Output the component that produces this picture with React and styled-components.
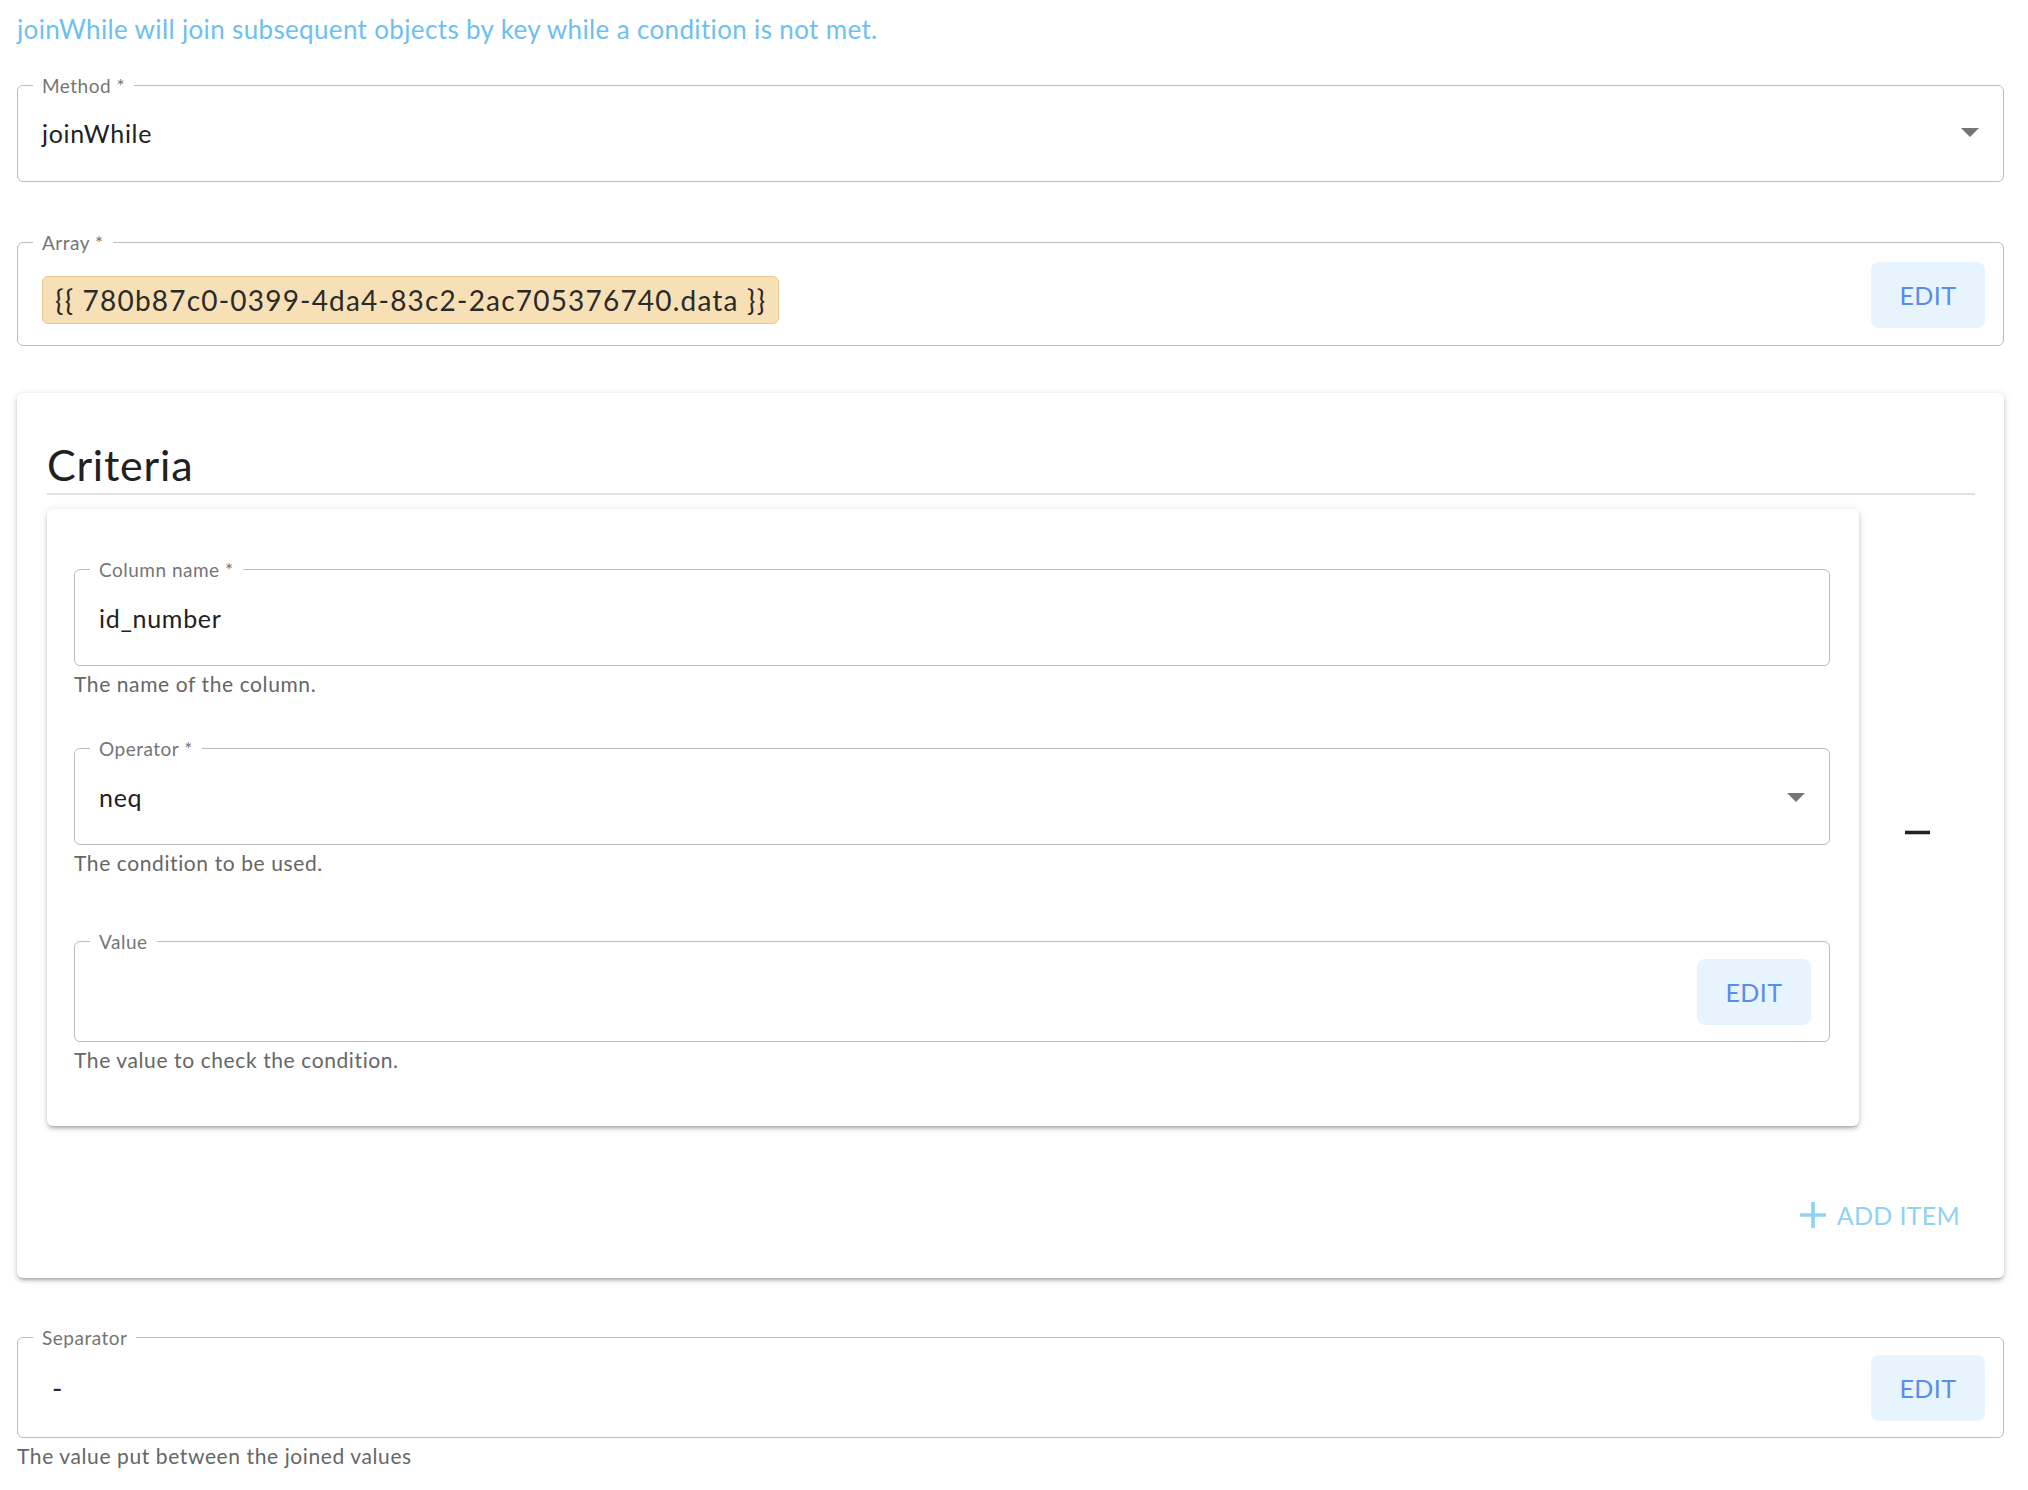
import React from "react";
import styled, { createGlobalStyle } from "styled-components";

const GlobalStyle = createGlobalStyle`
  html, body {
    margin: 0;
    background: #ffffff;
  }
  body {
    font-family: Lato, "Noto Sans", sans-serif;
    color: #212121;
  }
`;

// Layout
const Page = styled.div`
  display: flex;
  flex-direction: column;
  padding: 14px 24px 40px 17px;
`;

const Description = styled.p`
  margin: 0;
  font-size: 26px;
  line-height: 31px;
  letter-spacing: 0.35px;
  color: #6dbff1;
`;

const FieldBlock = styled.div`
  margin-top: ${(p) => p.$mt || 0}px;
  display: flex;
  flex-direction: column;
`;

const Fieldset = styled.fieldset`
  margin: 0;
  padding: 0 18px 0 24px;
  min-width: 0;
  border: 1px solid #bdbdbd;
  border-radius: 6px;
`;

const Legend = styled.legend`
  margin-left: -9px;
  padding: 0 9px;
  font-size: 19px;
  line-height: 19px;
  letter-spacing: 0.5px;
  color: #757575;
`;

const FieldRow = styled.div`
  display: flex;
  align-items: center;
  min-height: ${(p) => p.$h}px;
  padding: ${(p) => p.$pt || 0}px 0 ${(p) => p.$pb || 0}px;
`;

const ValueText = styled.span`
  font-size: 25px;
  letter-spacing: 0.7px;
  color: #212121;
`;

const Chip = styled.span`
  display: inline-flex;
  align-items: center;
  box-sizing: border-box;
  height: 48px;
  margin-top: ${(p) => p.$mt || 0}px;
  margin-left: ${(p) => (p.$plain ? -3 : 0)}px;
  padding: 0 12px;
  background: ${(p) => (p.$plain ? "transparent" : "#f7e0b6")};
  border: 1px solid ${(p) => (p.$plain ? "transparent" : "#e9c98f")};
  border-radius: 6px;
  font-size: 28px;
  letter-spacing: 1.2px;
  color: #2a2a2a;
  white-space: nowrap;
`;

const EditButton = styled.button`
  margin-left: auto;
  width: 114px;
  height: 66px;
  border: 0;
  border-radius: 8px;
  background: #e7f4fd;
  color: #5a8cee;
  font-family: Lato, "Noto Sans", sans-serif;
  font-size: 25px;
  letter-spacing: 0.5px;
  cursor: pointer;
`;

const Arrow = styled.svg`
  margin-left: auto;
  margin-right: 6px;
  width: 18px;
  height: 9px;
  fill: #757575;
`;

const Helper = styled.div`
  margin-top: 4px;
  font-size: 21px;
  line-height: 28px;
  letter-spacing: 0.6px;
  color: #666666;
`;

const Card = styled.section`
  margin-top: 47px;
  padding: 45px 29px 38px 30px;
  display: flex;
  flex-direction: column;
  background: #ffffff;
  border-radius: 6px;
  box-shadow: 0 3px 3px -2px rgba(0, 0, 0, 0.2), 0 3px 4px 0 rgba(0, 0, 0, 0.14),
    0 1px 8px 0 rgba(0, 0, 0, 0.12);
`;

const Heading = styled.h2`
  margin: 0;
  padding: 2px 0 3px;
  font-size: 43px;
  font-weight: 400;
  line-height: 50px;
  letter-spacing: 0.8px;
  color: #212121;
  border-bottom: 2px solid #e2e2e2;
`;

const ItemRow = styled.div`
  margin-top: 14px;
  display: flex;
  align-items: stretch;
`;

const ItemCard = styled.div`
  flex: 0 0 1812px;
  box-sizing: border-box;
  padding: 51px 29px 52px 27px;
  display: flex;
  flex-direction: column;
  background: #ffffff;
  border-radius: 6px;
  box-shadow: 0 3px 3px -2px rgba(0, 0, 0, 0.2), 0 3px 4px 0 rgba(0, 0, 0, 0.14),
    0 1px 8px 0 rgba(0, 0, 0, 0.12);
`;

const RemoveCell = styled.div`
  flex: 1;
  display: flex;
  align-items: center;
  justify-content: center;
  padding-top: 30px;
`;

const IconButton = styled.button`
  display: flex;
  align-items: center;
  justify-content: center;
  padding: 8px;
  border: 0;
  background: none;
  cursor: pointer;
  svg {
    width: 25px;
    height: 25px;
    fill: #222222;
  }
`;

const AddButton = styled.button`
  align-self: flex-end;
  margin-top: 64px;
  height: 50px;
  padding: 0 15px 0 8px;
  display: inline-flex;
  align-items: center;
  gap: 11px;
  border: 0;
  background: none;
  color: #8fd2f5;
  font-family: Lato, "Noto Sans", sans-serif;
  font-size: 25px;
  letter-spacing: 0.3px;
  cursor: pointer;
  svg {
    width: 26px;
    height: 26px;
    fill: #8fd2f5;
  }
`;

const DropArrow = () => (
  <Arrow viewBox="7 10 10 5">
    <path d="M7 10l5 5 5-5z" />
  </Arrow>
);

const TextField = ({ label, value, select, helper, mt, pb = 8 }) => (
  <FieldBlock $mt={mt}>
    <Fieldset>
      <Legend>{label}</Legend>
      <FieldRow $h={86 - pb} $pb={pb}>
        <ValueText>{value}</ValueText>
        {select && <DropArrow />}
      </FieldRow>
    </Fieldset>
    {helper && <Helper>{helper}</Helper>}
  </FieldBlock>
);

const App = () => {
  return (
    <>
      <GlobalStyle />
      <Page>
        <Description>
          joinWhile will join subsequent objects by key while a condition is not met.
        </Description>

        <TextField label="Method *" value="joinWhile" select mt={31} pb={11} />

        <FieldBlock $mt={51}>
          <Fieldset>
            <Legend>Array *</Legend>
            <FieldRow $pt={8} $pb={16} $h={69}>
              <Chip $mt={11}>{"{{ 780b87c0-0399-4da4-83c2-2ac705376740.data }}"}</Chip>
              <EditButton>EDIT</EditButton>
            </FieldRow>
          </Fieldset>
        </FieldBlock>

        <Card>
          <Heading>Criteria</Heading>
          <ItemRow>
            <ItemCard>
              <TextField
                label="Column name *"
                value="id_number"
                helper="The name of the column."
              />
              <TextField
                label="Operator *"
                value="neq"
                select
                helper="The condition to be used."
                mt={41}
              />
              <FieldBlock $mt={55}>
                <Fieldset>
                  <Legend>Value</Legend>
                  <FieldRow $pt={8} $pb={16}>
                    <EditButton>EDIT</EditButton>
                  </FieldRow>
                </Fieldset>
                <Helper>The value to check the condition.</Helper>
              </FieldBlock>
            </ItemCard>
            <RemoveCell>
              <IconButton aria-label="remove">
                <svg viewBox="5 5 14 14">
                  <path d="M19 13H5v-2h14v2z" />
                </svg>
              </IconButton>
            </RemoveCell>
          </ItemRow>
          <AddButton>
            <svg viewBox="5 5 14 14">
              <path d="M19 13h-6v6h-2v-6H5v-2h6V5h2v6h6v2z" />
            </svg>
            ADD ITEM
          </AddButton>
        </Card>

        <FieldBlock $mt={50}>
          <Fieldset>
            <Legend>Separator</Legend>
            <FieldRow $pt={8} $pb={16}>
              <Chip $plain>-</Chip>
              <EditButton>EDIT</EditButton>
            </FieldRow>
          </Fieldset>
          <Helper>The value put between the joined values</Helper>
        </FieldBlock>
      </Page>
    </>
  );
};

export default App;
